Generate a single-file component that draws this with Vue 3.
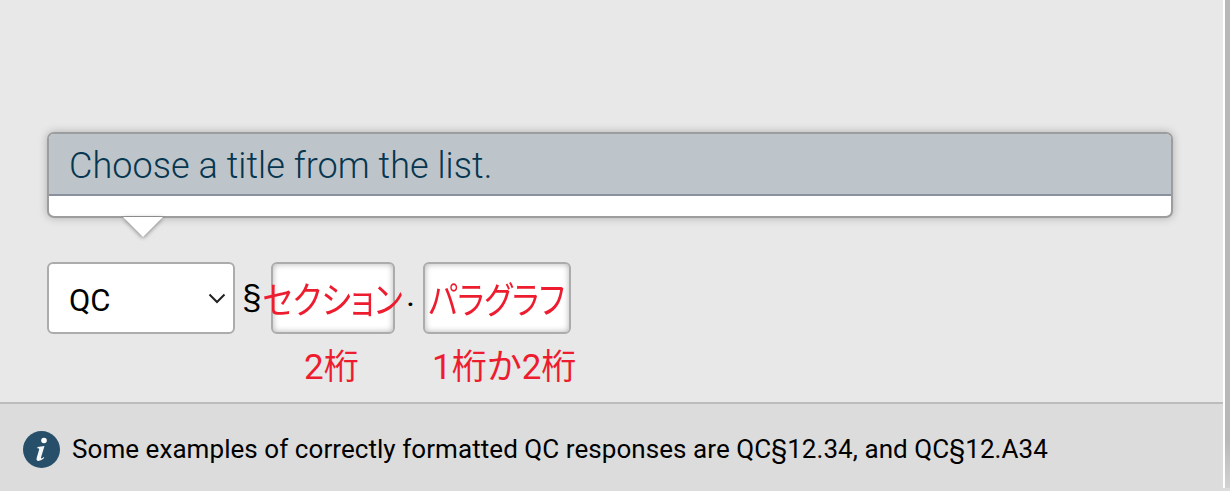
<template>
  <div class="page">
    <div class="panel">
      <div class="body">
        <div class="prompt">
          <div class="prompt-title">Choose a title from the list.</div>
          <div class="prompt-bottom"></div>
          <div class="prompt-arrow"></div>
        </div>
        <div class="answer-row">
          <div class="select-wrap">
            <select v-model="title" class="title-select">
              <option v-for="t in titles" :key="t" :value="t">{{ t }}</option>
            </select>
            <svg class="chevron" width="18" height="11" viewBox="0 0 18 11">
              <path d="M1.5 1.5 L9 9 L16.5 1.5" fill="none" stroke="#222" stroke-width="2" />
            </svg>
          </div>
          <span class="section-sign">§</span>
          <div class="field field-section">
            <div class="input-box"><span class="narrow narrow-section">セクション</span></div>
            <div class="hint hint-section">2桁</div>
          </div>
          <span class="dot">.</span>
          <div class="field field-para">
            <div class="input-box"><span class="narrow narrow-para">パラグラフ</span></div>
            <div class="hint hint-para">1桁か2桁</div>
          </div>
        </div>
      </div>
      <div class="footer">
        <svg class="info-icon" width="37" height="37" viewBox="0 0 37 37">
          <circle cx="18.5" cy="18.5" r="18.5" fill="#274f69" />
          <circle cx="21" cy="9.5" r="2.8" fill="#fff" />
          <path d="M14.5 16 L21.5 15 L18 26.5 Q17.7 28 19.5 27 L20.8 26 L21.2 27 Q17.5 30.5 14.8 30 Q13 29.5 13.6 27.3 L16.2 18.3 Q16.5 17.2 14.3 17.2 Z" fill="#f4f6f7" />
        </svg>
        <span class="footer-text">Some examples of correctly formatted QC responses are QC§12.34, and QC§12.A34</span>
      </div>
    </div>
    <div class="edge"></div>
  </div>
</template>

<script setup>
import { ref } from 'vue'

const titles = ['QC']
const title = ref('QC')
</script>

<style scoped>
.page {
  display: flex;
  width: 1230px;
  height: 491px;
  background: #dcdcdc;
  overflow: hidden;
}

.panel {
  width: 1223px;
  height: 491px;
  display: flex;
  flex-direction: column;
  background: #e8e8e8;
}

.body {
  flex: 0 0 402px;
  box-sizing: border-box;
  padding: 132px 50px 0 47px;
}

.edge {
  width: 5px;
  height: 488px;
  border-left: 2px solid #fff;
  background: linear-gradient(#b8b8b8 0, #b8b8b8 440px, #d2d2d2 100%);
}

.prompt {
  position: relative;
  height: 86px;
  box-sizing: border-box;
  border: 2px solid #9d9d9d;
  border-radius: 7px;
  background: #fff;
  box-shadow: 0 0 8px rgba(0, 0, 0, 0.25);
}

.prompt-title {
  height: 62px;
  box-sizing: border-box;
  padding-left: 20px;
  background: #bdc5ca;
  border-bottom: 2px solid #8b909f;
  border-radius: 5px 5px 0 0;
  font-family: Roboto, sans-serif;
  font-weight: 300;
  font-size: 36px;
  line-height: 64px;
  letter-spacing: 0.05px;
  color: #063650;
}

.prompt-arrow {
  position: absolute;
  left: 74px;
  top: 83px;
  width: 40px;
  height: 20px;
  filter: drop-shadow(0 1px 2px rgba(0, 0, 0, 0.45));
}

.prompt-arrow::before {
  content: "";
  display: block;
  width: 40px;
  height: 20px;
  background: #fff;
  clip-path: polygon(0 0, 100% 0, 50% 100%);
}

.answer-row {
  display: flex;
  align-items: flex-start;
  margin-top: 44px;
}

.select-wrap {
  position: relative;
  width: 188px;
  height: 72px;
}

.title-select {
  appearance: none;
  width: 100%;
  height: 100%;
  box-sizing: border-box;
  border: 2px solid #acacac;
  border-radius: 6px;
  background: #fff;
  padding: 5px 0 0 20px;
  font-family: Roboto, sans-serif;
  font-size: 31px;
  color: #000;
}

.chevron {
  position: absolute;
  right: 9px;
  top: 31px;
  pointer-events: none;
}

.section-sign {
  width: 37px;
  padding-left: 7px;
  margin-right: -1px;
  box-sizing: border-box;
  font-family: "Liberation Sans", sans-serif;
  font-size: 35px;
  line-height: 72px;
  color: #000;
}

.field {
  display: flex;
  flex-direction: column;
  align-items: flex-start;
}

.field-section {
  width: 124px;
}

.field-para {
  width: 148px;
}

.input-box {
  display: flex;
  align-items: center;
  justify-content: center;
  width: 100%;
  height: 72px;
  box-sizing: border-box;
  border: 2px solid #acacac;
  border-radius: 6px;
  background: #fff;
  box-shadow: inset 0 0 6px rgba(0, 0, 0, 0.3);
  font-family: Roboto, "Noto Sans CJK JP", sans-serif;
  font-size: 37px;
  font-feature-settings: "palt";
  color: #ed1c2e;
  white-space: nowrap;
}

.narrow {
  flex: none;
  display: inline-block;
}

.narrow-section {
  transform: scaleX(0.86);
}

.narrow-para {
  transform: scaleX(0.835);
}

.hint {
  margin-top: 12px;
  font-family: Roboto, "Noto Sans CJK JP", sans-serif;
  font-size: 35px;
  line-height: 44px;
  color: #ed1c2e;
  white-space: nowrap;
}

.hint-section {
  margin-left: 33px;
}

.hint-para {
  margin-left: 9px;
}

.dot {
  width: 28px;
  padding-left: 3px;
  box-sizing: border-box;
  text-align: center;
  font-family: Roboto, sans-serif;
  font-size: 24px;
  font-weight: 700;
  line-height: 72px;
  color: #000;
}

.footer {
  flex: 1;
  display: flex;
  align-items: center;
  box-sizing: border-box;
  padding: 3px 0 0 23px;
  background: #dcdcdc;
  border-top: 2px solid #bcbcbc;
}

.info-icon {
  flex: none;
}

.footer-text {
  margin-left: 12px;
  font-family: Roboto, sans-serif;
  font-size: 26px;
  letter-spacing: 0.06px;
  color: #000;
  white-space: nowrap;
}
</style>
